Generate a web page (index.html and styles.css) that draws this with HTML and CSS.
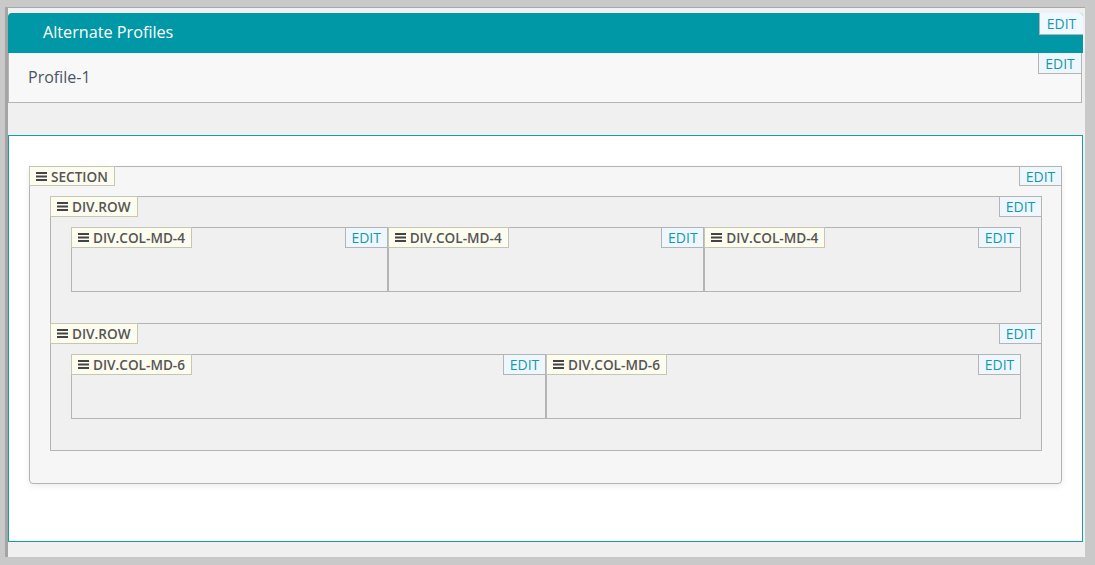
FILE: index.html
```html
<!DOCTYPE html>
<html lang="en">
<head>
    <meta charset="UTF-8">
    <meta name="viewport" content="width=device-width, initial-scale=1.0">
    <title>Alternate Profiles</title>
    <link rel="stylesheet" href="styles.css">
</head>
<body>
    <div class="frame">
        <div class="profiles">
            <div class="profiles-head">
                <h1>Alternate Profiles</h1>
                <span class="edit edit-head">EDIT</span>
            </div>
            <div class="profiles-body">
                <span class="profile-name">Profile-1</span>
                <span class="edit">EDIT</span>
            </div>
        </div>

        <div class="canvas">
            <div class="box section">
                <div class="box-head">
                    <span class="tag tag-section"><svg class="grip" width="11" height="9" viewBox="0 0 11 9"><rect y="0" width="11" height="2"/><rect y="3.5" width="11" height="2"/><rect y="7" width="11" height="2"/></svg>SECTION</span>
                    <span class="edit">EDIT</span>
                </div>

                <div class="box row">
                    <div class="box-head">
                        <span class="tag"><svg class="grip" width="11" height="9" viewBox="0 0 11 9"><rect y="0" width="11" height="2"/><rect y="3.5" width="11" height="2"/><rect y="7" width="11" height="2"/></svg>DIV.ROW</span>
                        <span class="edit">EDIT</span>
                    </div>
                    <div class="cols cols-3">
                        <div class="box col">
                            <div class="box-head">
                                <span class="tag"><svg class="grip" width="11" height="9" viewBox="0 0 11 9"><rect y="0" width="11" height="2"/><rect y="3.5" width="11" height="2"/><rect y="7" width="11" height="2"/></svg>DIV.COL-MD-4</span>
                                <span class="edit">EDIT</span>
                            </div>
                        </div>
                        <div class="box col">
                            <div class="box-head">
                                <span class="tag"><svg class="grip" width="11" height="9" viewBox="0 0 11 9"><rect y="0" width="11" height="2"/><rect y="3.5" width="11" height="2"/><rect y="7" width="11" height="2"/></svg>DIV.COL-MD-4</span>
                                <span class="edit">EDIT</span>
                            </div>
                        </div>
                        <div class="box col">
                            <div class="box-head">
                                <span class="tag"><svg class="grip" width="11" height="9" viewBox="0 0 11 9"><rect y="0" width="11" height="2"/><rect y="3.5" width="11" height="2"/><rect y="7" width="11" height="2"/></svg>DIV.COL-MD-4</span>
                                <span class="edit">EDIT</span>
                            </div>
                        </div>
                    </div>
                </div>

                <div class="box row">
                    <div class="box-head">
                        <span class="tag"><svg class="grip" width="11" height="9" viewBox="0 0 11 9"><rect y="0" width="11" height="2"/><rect y="3.5" width="11" height="2"/><rect y="7" width="11" height="2"/></svg>DIV.ROW</span>
                        <span class="edit">EDIT</span>
                    </div>
                    <div class="cols cols-2">
                        <div class="box col">
                            <div class="box-head">
                                <span class="tag"><svg class="grip" width="11" height="9" viewBox="0 0 11 9"><rect y="0" width="11" height="2"/><rect y="3.5" width="11" height="2"/><rect y="7" width="11" height="2"/></svg>DIV.COL-MD-6</span>
                                <span class="edit">EDIT</span>
                            </div>
                        </div>
                        <div class="box col">
                            <div class="box-head">
                                <span class="tag"><svg class="grip" width="11" height="9" viewBox="0 0 11 9"><rect y="0" width="11" height="2"/><rect y="3.5" width="11" height="2"/><rect y="7" width="11" height="2"/></svg>DIV.COL-MD-6</span>
                                <span class="edit">EDIT</span>
                            </div>
                        </div>
                    </div>
                </div>
            </div>
        </div>
    </div>
</body>
</html>
```

FILE: styles.css
```css
body {
    margin: 0;
    background-color: #c9c9c9;
    font-family: 'Open Sans', 'DejaVu Sans', sans-serif;
    color: #4a4a4a;
}

.frame {
    margin: 7px 0 0 5px;
    width: 1080px;
    height: 550px;
    box-sizing: border-box;
    background-color: #f0f0f0;
    border-top: 1px solid #a8a8a8;
    border-left: 3px solid #a4a4a4;
    padding: 5px 2px 0 0;
}

/* profiles panel */
.profiles-head {
    display: flex;
    justify-content: space-between;
    align-items: flex-start;
    height: 40px;
    background-color: #0097a7;
    border-radius: 4px 4px 0 0;
}

.profiles-head h1 {
    margin: 0;
    padding: 8px 0 0 35px;
    font-size: 16.2px;
    font-weight: 400;
    color: #ffffff;
}

.profiles-body {
    display: flex;
    justify-content: space-between;
    align-items: flex-start;
    width: 1074px;
    height: 50px;
    box-sizing: border-box;
    background-color: #f8f8f8;
    border: 1px solid #b4b4b4;
    border-top: none;
}

.profile-name {
    padding: 13px 0 0 19px;
    font-size: 16px;
    color: #4b5563;
}

/* edit buttons */
.edit {
    display: inline-flex;
    align-items: center;
    justify-content: center;
    width: 43px;
    height: 21px;
    box-sizing: border-box;
    background-color: #eef7fd;
    border: 1px solid #b4b4b4;
    font-size: 14px;
    color: #1597ad;
}

.profiles-body .edit {
    border-top: none;
    border-right: none;
}

.edit-head {
    width: 44px;
    height: 22px;
    border-radius: 0 4px 0 0;
    border-top: none;
    border-right: none;
    background-color: #f0f9ff;
}

/* layout canvas */
.canvas {
    margin-top: 32px;
    height: 407px;
    box-sizing: border-box;
    background-color: #ffffff;
    border: 1px solid #1a9aa8;
    padding: 30px 20px 0 20px;
}

.box {
    border: 1px solid #b4b4b4;
}

.box-head {
    display: flex;
    justify-content: space-between;
    align-items: flex-start;
    margin: -1px -1px 10px -1px;
}

.col > .box-head {
    margin-bottom: 0;
}

.tag {
    display: inline-flex;
    align-items: center;
    gap: 4px;
    height: 21px;
    box-sizing: border-box;
    padding: 0 6px 0 6px;
    background-color: #fcfcef;
    border: 1px solid #c6c6b6;
    font-size: 13.6px;
    font-weight: 600;
    color: #555555;
}

.grip {
    fill: #444444;
}

.section {
    height: 318px;
    box-sizing: border-box;
    background-color: #f6f6f6;
    border-radius: 0 4px 4px 4px;
    box-shadow: 0 2px 6px rgba(0, 0, 0, 0.08);
}

.section > .box-head .tag,
.section > .box-head .edit {
    height: 20px;
}

.row {
    margin: 0 19px 0 20px;
    height: 128px;
    box-sizing: border-box;
    background-color: #f0f0f0;
}

.row + .row {
    margin-top: -1px;
}

.cols {
    display: grid;
    margin: 0 20px;
}

.cols-3 {
    grid-template-columns: 1fr 1fr 1fr;
}

.cols-2 {
    grid-template-columns: 1fr 1fr;
}

.col {
    height: 65px;
    box-sizing: border-box;
    background-color: #f0f0f0;
}
```
